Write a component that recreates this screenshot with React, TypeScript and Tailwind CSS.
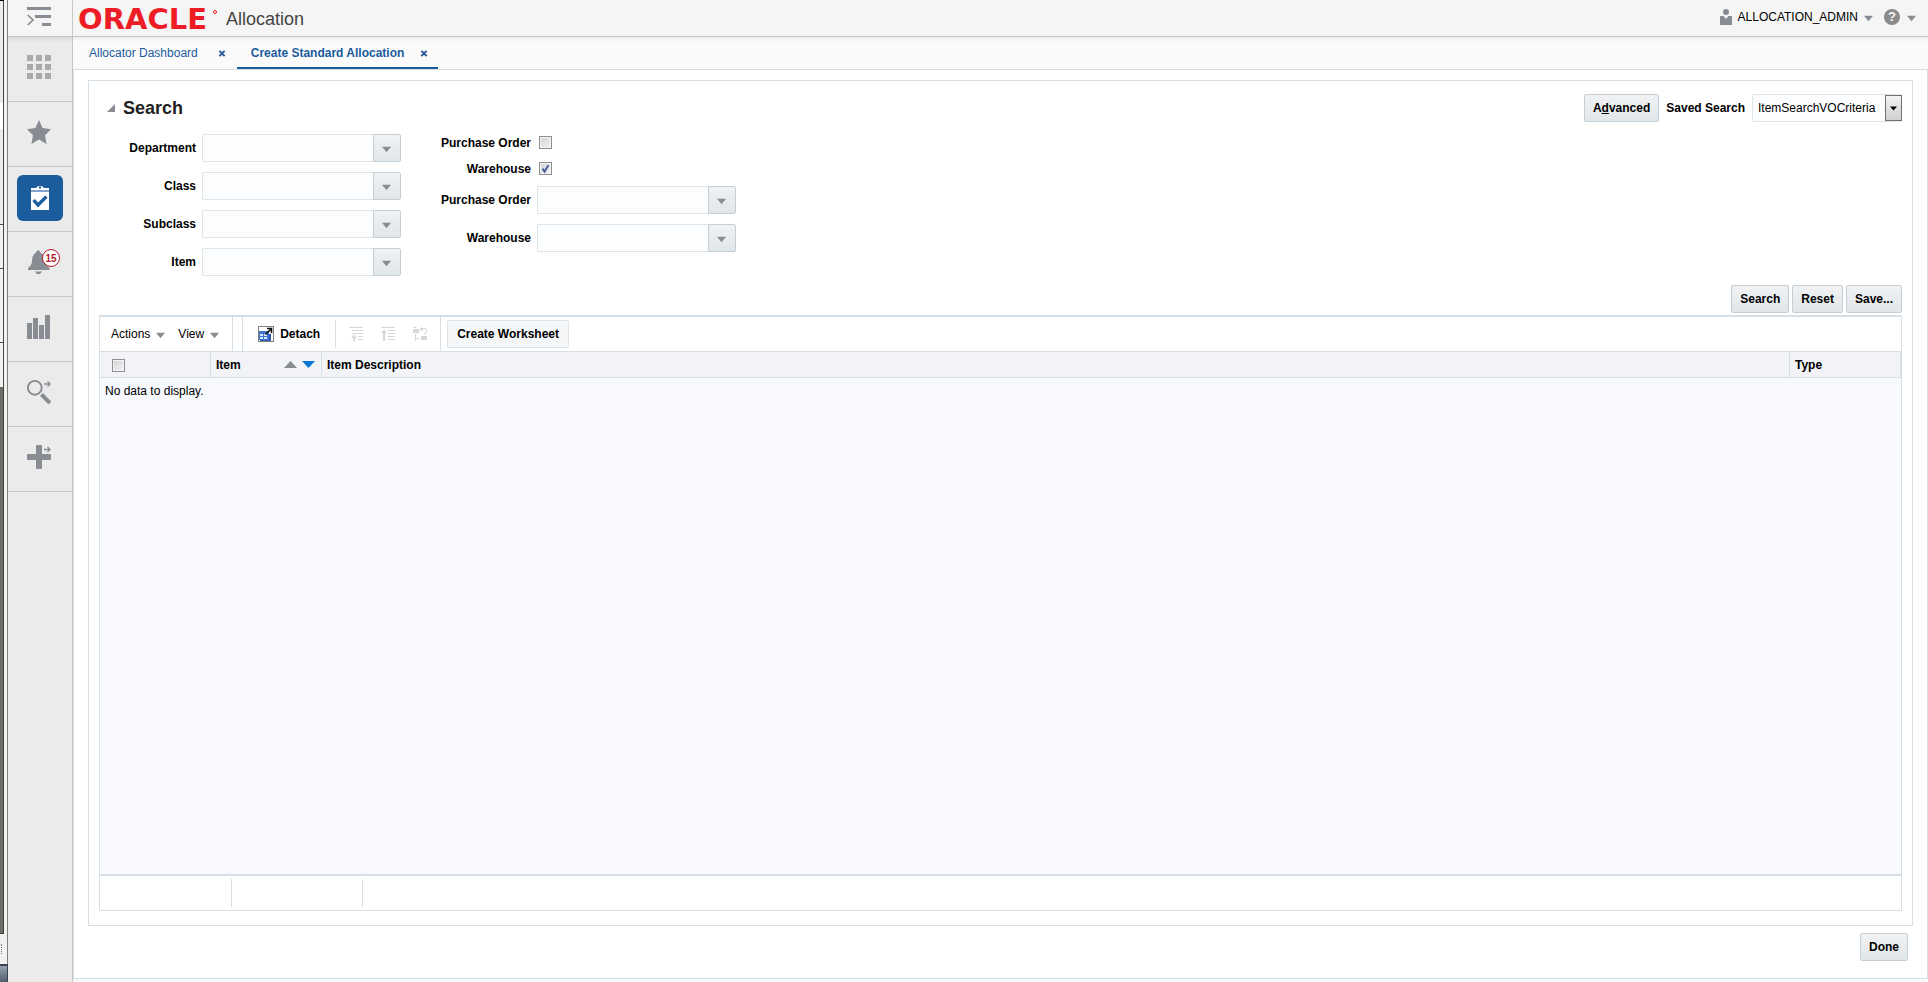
import React, { useState } from "react";

function Down({ className }: { className?: string }) {
  return (
    <svg viewBox="0 0 10 7" className={"shrink-0 " + (className ?? "")} aria-hidden="true">
      <path d="M0 0.5H10L5 6.5Z" fill="currentColor" />
    </svg>
  );
}

function Combo({ id, label }: { id: string; label: string }) {
  return (
    <div className="flex h-7 w-[199px]">
      <input
        id={id}
        type="text"
        className="min-w-0 flex-1 rounded-l-xs border border-r-0 border-[#dfe4e7] bg-[#fcfdff] px-1 text-xs outline-none"
      />
      <button
        type="button"
        aria-label={"Open " + label}
        className="flex w-7 items-center justify-center rounded-r-xs border border-[#c4ced7] bg-linear-to-b from-[#f0f2f4] to-[#e1e6e9] text-[#878d92]"
      >
        <Down className="mt-0.5 mr-0.5 h-[7px] w-[9px]" />
      </button>
    </div>
  );
}

function Check({ id, label, initial }: { id: string; label?: string; initial?: boolean }) {
  const [on, setOn] = useState(!!initial);
  return (
    <span className="relative block size-[13px]">
      <input
        id={id}
        type="checkbox"
        aria-label={label}
        checked={on}
        onChange={() => setOn(!on)}
        className="block size-[13px] appearance-none border border-[#8e8f8f] bg-linear-to-br from-[#cfd1d5] to-[#f6f6f6] shadow-[inset_0_0_0_1px_#f4f4f4]"
      />
      {on && (
        <svg viewBox="0 0 13 13" className="pointer-events-none absolute inset-0 size-[13px]" aria-hidden="true">
          <path d="M3.6 6.6L5.6 9.6L9.4 3.2" fill="none" stroke="#4b5f9b" strokeWidth="1.9" />
        </svg>
      )}
    </span>
  );
}

function PushButton({ children, className }: { children: React.ReactNode; className?: string }) {
  return (
    <button
      type="button"
      className={
        "h-7 rounded-xs border border-[#c4ced7] bg-linear-to-b from-[#f0f2f4] to-[#e1e6e9] px-2 text-xs font-bold text-black " +
        (className ?? "")
      }
    >
      {children}
    </button>
  );
}

function WindowEdge() {
  return (
    <div className="flex w-2 shrink-0 flex-col bg-[#f2f1ef]" aria-hidden="true">
      <div className="flex flex-1 border-r border-[#808080]">
        <div className="flex w-1 flex-col">
          <div className="h-px bg-black" />
          <div className="h-[102px] border-r border-[#4a4845] bg-[#ececea]" />
          <div className="h-[26px] border-r border-[#4a4845] bg-white" />
          <div className="h-24 border-r border-b border-[#4a4845] bg-[#ececea]" />
          <div className="h-11 border-r border-b border-[#4a4845] bg-[#f3f2f0]" />
          <div className="h-[74px] border-r border-b border-[#4a4845] bg-[#f3f2f0]" />
          <div className="h-11 border-r border-[#4a4845] bg-[#f3f2f0]" />
          <div className="flex-1 border-r border-b border-[#43413e] bg-[#6e6c69]" />
          <div className="flex h-[30px] items-center">
            <div className="ml-px h-[10px] border-l border-dotted border-[#777777]" />
          </div>
        </div>
      </div>
      <div className="h-[18px] border-t-2 border-r border-[#39424d] bg-linear-to-b from-[#94a0ac] to-[#4f5e70]" />
    </div>
  );
}

const iconCls = "size-6";

function Sidebar() {
  const cell = "flex h-[65px] w-full items-center justify-center border-b border-[#c6c6c6] text-[#878d92]";
  return (
    <nav className="flex w-[65px] shrink-0 flex-col border-r border-[#c6c6c6] bg-[#ebebeb]">
      <div className="h-[37px] border-b border-[#c4c4c4] bg-[#f5f5f5]">
        <button type="button" aria-label="Toggle menu" className="flex h-full w-full items-center justify-center pr-0.5 pb-1 text-[#878d92]">
          <svg viewBox="0 0 24 20" className="h-5 w-6" aria-hidden="true">
            <path d="M0 1H24V4H0ZM8 9H24V12H8ZM15 17H24V20H15Z" fill="currentColor" />
            <path d="M0.8 9L6 14L0.8 19" fill="none" stroke="currentColor" strokeWidth="1.7" />
          </svg>
        </button>
      </div>
      <div className="h-[5px] bg-linear-to-b from-[#dadada] to-[#ebebeb]" />
      <button type="button" aria-label="Applications" className={cell + " -mt-[5px] h-16 pr-0.5 pb-1"}>
        <svg viewBox="0 0 24 24" className={iconCls} fill="#a9a9ae" aria-hidden="true">
          <path d="M0 0H6V6H0ZM9 0H15V6H9ZM18 0H24V6H18ZM0 9H6V15H0ZM9 9H15V15H9ZM18 9H24V15H18ZM0 18H6V24H0ZM9 18H15V24H9ZM18 18H24V24H18Z" />
        </svg>
      </button>
      <button type="button" aria-label="Favorites" className={cell + " pr-0.5 pb-1"}>
        <svg viewBox="0 0 24 24" className={iconCls} fill="currentColor" aria-hidden="true">
          <path d="M12 0L15.6 8L24 9.2L18 15.2L19.6 24L12 19.6L4.4 24L6 15.2L0 9.2L8.4 8Z" />
        </svg>
      </button>
      <button type="button" aria-label="Tasks" className={cell + " pb-0.5"}>
        <span className="flex size-[46px] items-center justify-center rounded-md bg-[#1a5c9c]">
          <svg viewBox="0 0 18 24" className="h-6 w-[18px]" aria-hidden="true">
            <path d="M0 2H5Q6 0 9 0Q12 0 13 2H18V4.5H0Z" fill="#fff" />
            <circle cx="9" cy="1.7" r="1.1" fill="#1a5c9c" />
            <path d="M0 4.5H18V6H0Z" fill="#7ba1c8" />
            <path d="M0 6H18V24H0Z" fill="#fff" />
            <path d="M2.6 14L7 19L15.4 10.6" fill="none" stroke="#1a5c9c" strokeWidth="3.4" />
          </svg>
        </span>
      </button>
      <button type="button" aria-label="Notifications" className={cell + " pr-0.5 pb-1"}>
        <span className="relative block">
          <svg viewBox="0 0 24 24" className={iconCls} fill="currentColor" aria-hidden="true">
            <path d="M11 0Q13 1 14 3Q18 5 18 11Q18.5 15 22.5 18V20H1V18Q5 15 5 11Q5 5 8.5 3Q9.5 1 11 0Z" />
            <path d="M8 21.5H15L13 24H10Z" />
          </svg>
          <span className="absolute -top-px left-[15px] flex size-[18px] items-center justify-center rounded-full border border-[#b01c2e] bg-white text-[10px] font-bold text-[#b01c2e]">
            15
          </span>
        </span>
      </button>
      <button type="button" aria-label="Reports" className={cell + " pr-0.5 pb-1"}>
        <svg viewBox="0 0 24 24" className={iconCls} fill="currentColor" aria-hidden="true">
          <path d="M0 8H5V24H0ZM6 3H11V24H6ZM12 10H17V24H12ZM18 0H23V24H18Z" />
        </svg>
      </button>
      <button type="button" aria-label="Search tasks" className={cell + " pr-0.5 pb-1"}>
        <svg viewBox="0 0 24 24" className={iconCls} fill="none" stroke="currentColor" aria-hidden="true">
          <circle cx="7.8" cy="7.8" r="6.9" strokeWidth="1.9" />
          <path d="M14.5 14.5L23 23" strokeWidth="4" />
          <path d="M17 4H23M20.5 1.5L23 4L20.5 6.5" strokeWidth="1.3" />
        </svg>
      </button>
      <button type="button" aria-label="Create" className={cell + " pr-0.5 pb-1"}>
        <svg viewBox="0 0 24 24" className={iconCls} aria-hidden="true">
          <path d="M10 0H14Q15 0 15 1V9H23Q24 9 24 10V14Q24 15 23 15H15V23Q15 24 14 24H10Q9 24 9 23V15H1Q0 15 0 14V10Q0 9 1 9H9V1Q9 0 10 0Z" fill="currentColor" />
          <path d="M17 4.500H23M20.5 2L23 4.500L20.5 7" fill="none" stroke="currentColor" strokeWidth="1.3" />
        </svg>
      </button>
    </nav>
  );
}

function Header() {
  return (
    <header className="flex h-[37px] items-start justify-between border-b border-[#c4c4c4] bg-[#f5f5f5] pr-3 pl-[5px]">
      <div className="flex items-center">
        <span className="relative flex h-[34px] w-[148px] items-center font-['DejaVu_Sans',sans-serif] text-[29px] leading-8 font-bold text-[#ee1c25]">
          ORACLE
          <span className="absolute top-2 right-[9px] size-1 rounded-full border border-[#ee1c25]" />
        </span>
        <h1 className="text-lg leading-[38px] text-[#444444]">Allocation</h1>
      </div>
      <div className="flex h-[34px] items-center text-[#878d92]">
        <button type="button" className="flex h-full items-center text-xs text-black">
          <svg viewBox="0 0 12 16" className="mr-1.5 h-4 w-3 text-[#878d92]" fill="currentColor" aria-hidden="true">
            <circle cx="6" cy="3" r="3" />
            <path d="M0 7H3.5L6 10L8.5 7H12V16H0Z" />
          </svg>
          <span>ALLOCATION_ADMIN</span>
          <Down className="mt-0.5 ml-1.5 h-[7px] w-[9px] text-[#878d92]" />
        </button>
        <button type="button" aria-label="Help" className="ml-[11px] flex h-full items-center">
          <span className="flex size-4 items-center justify-center rounded-full bg-[#8b8b8b] text-[13px] font-bold text-[#f5f5f5]">?</span>
          <Down className="mt-0.5 ml-[7px] h-[7px] w-[9px]" />
        </button>
      </div>
    </header>
  );
}

function CloseMark({ label }: { label: string }) {
  return (
    <button type="button" aria-label={"Close " + label} className="text-[#2a5a99]">
      <svg viewBox="0 0 8 8" className="h-[7px] w-2" aria-hidden="true">
        <path d="M1 1L7 7M7 1L1 7" stroke="currentColor" strokeWidth="2.3" />
      </svg>
    </button>
  );
}

function Tabs() {
  return (
    <div className="flex h-8 bg-linear-to-b from-[#ededed] via-[#fafafa] via-15% to-[#fafafa] pl-4 text-xs text-[#1b5c9e]">
      <div className="flex items-center gap-5 pr-[11px]">
        <a href="#dashboard">Allocator Dashboard</a>
        <CloseMark label="Allocator Dashboard" />
      </div>
      <div className="flex items-center gap-4 border-b-2 border-[#1a5c9c] pt-0.5 pr-2.5 pl-3.5">
        <a href="#create" className="font-bold">
          Create Standard Allocation
        </a>
        <CloseMark label="Create Standard Allocation" />
      </div>
    </div>
  );
}

function SearchForm() {
  const left = ["Department", "Class", "Subclass", "Item"];
  const right = ["Purchase Order", "Warehouse"];
  return (
    <section className="pb-0.5">
      <div className="flex h-10 items-start justify-between">
        <h2 className="flex items-center pl-2 text-lg font-bold text-[#222222]">
          <svg viewBox="0 0 8 8" className="mr-2 size-2" aria-hidden="true">
            <path d="M8 0V8H0Z" fill="#878d92" />
          </svg>
          Search
        </h2>
        <div className="flex items-center text-xs">
          <PushButton>
            A<u>d</u>vanced
          </PushButton>
          <label htmlFor="saved" className="px-[7px] font-bold">
            Saved Search
          </label>
          <div className="relative">
            <select
              id="saved"
              className="h-7 w-[150px] appearance-none rounded-xs border border-[#dfe4e7] bg-[#fcfdff] pr-5 pl-[5px] text-xs"
            >
              <option>ItemSearchVOCriteria</option>
            </select>
            <span className="pointer-events-none absolute top-px right-0 flex h-[26px] w-[17px] items-center justify-center border border-[#707070] bg-linear-to-b from-[#f4f4f4] to-[#cfcfcf]">
              <Down className="h-[5px] w-[7px]" />
            </span>
          </div>
        </div>
      </div>
      <div className="flex text-xs font-bold">
        <div className="flex w-[302px] flex-col gap-2.5">
          {left.map((name) => (
            <div key={name} className="flex items-center justify-end gap-1.5">
              <label htmlFor={name}>{name}</label>
              <Combo id={name} label={name} />
            </div>
          ))}
        </div>
        <div className="flex w-[335px] flex-col pt-0.5">
          {right.map((name) => (
            <div key={name} className="mb-[13px] flex h-[13px] items-center gap-2">
              <label htmlFor={"use-" + name} className="w-[130px] text-right">
                {name}
              </label>
              <Check id={"use-" + name} initial={name === "Warehouse"} />
            </div>
          ))}
          <div className="-mt-0.5 flex flex-col gap-2.5">
            {right.map((name) => (
              <div key={name} className="flex items-center justify-end gap-1.5">
                <label htmlFor={"pick-" + name}>{name}</label>
                <Combo id={"pick-" + name} label={name} />
              </div>
            ))}
          </div>
        </div>
      </div>
      <div className="mt-[9px] flex justify-end gap-[3px]">
        <PushButton>Search</PushButton>
        <PushButton>Reset</PushButton>
        <PushButton>Save...</PushButton>
      </div>
    </section>
  );
}

function Toolbar() {
  return (
    <div className="flex h-[35px] items-center border-b border-[#d6dfe6] bg-white text-xs">
      <div className="flex h-full items-center gap-[13px] border-r border-[#d6dfe6] pr-[13px] pl-[11px]">
        <button type="button" className="flex items-center gap-1.5">
          Actions
          <Down className="mt-0.5 h-[7px] w-[9px] text-[#878d92]" />
        </button>
        <button type="button" className="flex items-center gap-1.5">
          View
          <Down className="mt-0.5 h-[7px] w-[9px] text-[#878d92]" />
        </button>
      </div>
      <div className="ml-[9px] flex h-full items-center border-l border-r border-[#d6dfe6]">
        <button type="button" className="flex h-7 items-center gap-1.5 border-r border-[#d6dfe6] px-[15px] font-bold">
          <svg viewBox="0 0 16 16" className="size-4" aria-hidden="true">
            <rect x="0.5" y="0.5" width="15" height="15" fill="#fff" stroke="#000" strokeDasharray="1 1" />
            <path d="M1 5H11V14H1Z" fill="#3f73d2" />
            <path d="M2 8H5V10H2ZM6 8H9V10H6ZM2 11H5V13H2ZM6 11H9V13H6Z" fill="#dce8fb" />
            <path d="M11 8H13V15H2V14H11Z" fill="#2a57b5" />
            <path d="M7.5 8.5L13 3M9 2.5H13.5V7" fill="none" stroke="#111" strokeWidth="1.6" />
          </svg>
          Detach
        </button>
        <div className="flex gap-[18px] px-[13px] text-[#d6d7d9]">
          <button type="button" disabled aria-label="Go up">
            <svg viewBox="0 0 14 14" className="size-3.5" aria-hidden="true">
              <path d="M0 0H14V1H0ZM3 3H14V4H3ZM3 6H14V7H3ZM9 9H14V10H9ZM9 12H14V13H9ZM4 10H6V14H4ZM2 11L5 7.5L8 11Z" fill="currentColor" />
            </svg>
          </button>
          <button type="button" disabled aria-label="Go to top">
            <svg viewBox="0 0 14 14" className="size-3.5" aria-hidden="true">
              <path d="M0 0H14V1H0ZM7 3H14V4H7ZM7 6H14V7H7ZM7 9H14V10H7ZM7 12H14V13H7ZM2 5H4V14H2ZM0 6L3 2.5L6 6Z" fill="currentColor" />
            </svg>
          </button>
          <button type="button" disabled aria-label="Show as top">
            <svg viewBox="0 0 14 14" className="size-3.5" aria-hidden="true">
              <path d="M0 0H3V1H0ZM0 2H6V6H0ZM8 9H14V13H8ZM2 7H3V14H2ZM3 11H6V12H3ZM8 0H9V4H8ZM7 1H10V3H7ZM10 1H13V2H10ZM13 2H14V6H13ZM11 6H13V7H11Z" fill="currentColor" />
            </svg>
          </button>
        </div>
      </div>
      <button type="button" className="ml-1.5 h-7 rounded-xs border border-[#dfe4e7] bg-[#f4f6f8] px-[9px] font-bold">
        Create Worksheet
      </button>
    </div>
  );
}

function Results() {
  const th = "h-[26px] border-r border-b border-[#d6dfe6] bg-[#f1f3f7] px-[5px] text-left align-middle font-bold";
  return (
    <section className="flex flex-1 flex-col border border-t-2 border-[#d6dfe6] text-xs">
      <Toolbar />
      <div className="flex-1 bg-[#f7f9fd]">
        <table className="w-full table-fixed border-separate border-spacing-0">
          <thead>
            <tr>
              <th className={th + " w-[111px]"}>
                <div className="pt-0.5 pl-[7px]">
                  <Check id="all" label="Select all" />
                </div>
              </th>
              <th className={th + " w-[111px]"}>
                <div className="flex items-center justify-between">
                  Item
                  <span className="flex items-center gap-[5px] pr-px">
                    <svg viewBox="0 0 13 7" className="h-[7px] w-[13px]" aria-hidden="true">
                      <path d="M0 7H13L6.5 0Z" fill="#878d92" />
                    </svg>
                    <svg viewBox="0 0 13 7" className="h-[7px] w-[13px]" aria-hidden="true">
                      <path d="M0 0H13L6.5 7Z" fill="#0b76d3" />
                    </svg>
                  </span>
                </div>
              </th>
              <th className={th}>Item Description</th>
              <th className={th + " w-[111px]"}>Type</th>
            </tr>
          </thead>
          <tbody>
            <tr>
              <td colSpan={4} className="px-[5px] py-[5px]">
                No data to display.
              </td>
            </tr>
          </tbody>
        </table>
      </div>
      <div className="flex h-9 items-center border-t-2 border-[#d6dfe6] bg-white">
        <div className="h-7 w-[132px] border-r border-[#d6dfe6]" />
        <div className="h-7 w-[131px] border-r border-[#d6dfe6]" />
      </div>
    </section>
  );
}

export default function App() {
  return (
    <div className="flex min-h-screen bg-[#fafafa] font-['Liberation_Sans',Arial,sans-serif] text-black">
      <WindowEdge />
      <Sidebar />
      <div className="flex min-w-0 flex-1 flex-col">
        <Header />
        <Tabs />
        <main className="mb-[3px] flex flex-1 flex-col border border-[#d6dfe6] bg-white px-3.5 pt-2.5 pb-[17px]">
          <div className="flex flex-1 flex-col border border-[#d6dfe6] px-2.5 pt-[13px] pb-3.5">
            <SearchForm />
            <Results />
          </div>
          <div className="mt-[7px] flex justify-end pr-[5px]">
            <PushButton>Done</PushButton>
          </div>
        </main>
      </div>
    </div>
  );
}
